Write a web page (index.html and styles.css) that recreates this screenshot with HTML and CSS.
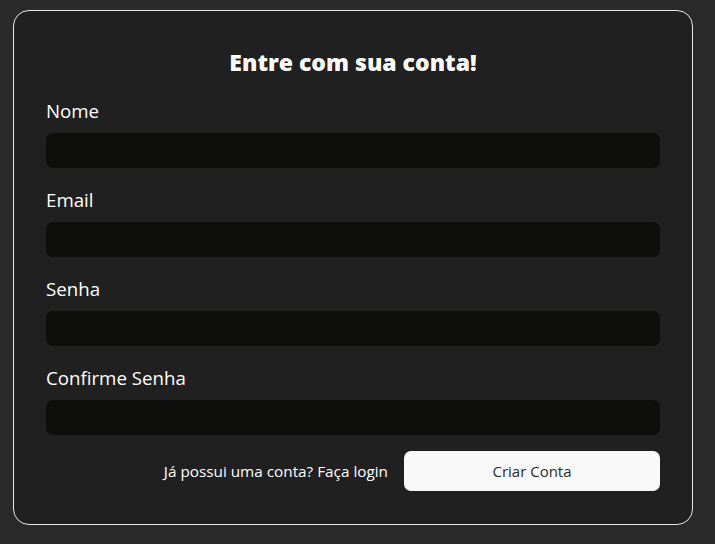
FILE: index.html
```html
<!DOCTYPE html>
<html lang="pt-BR">
<head>
<meta charset="utf-8">
<link rel="stylesheet" href="styles.css">
</head>
<body>
<form class="card">
  <h1 class="title">Entre com sua conta!</h1>
  <div class="field">
    <label class="label">Nome</label>
    <input class="input" type="text">
  </div>
  <div class="field">
    <label class="label">Email</label>
    <input class="input" type="text">
  </div>
  <div class="field">
    <label class="label">Senha</label>
    <input class="input" type="password">
  </div>
  <div class="field field-last">
    <label class="label">Confirme Senha</label>
    <input class="input" type="password">
  </div>
  <div class="actions">
    <a class="link">Já possui uma conta? Faça login</a>
    <button class="button" type="button">Criar Conta</button>
  </div>
</form>
</body>
</html>
```

FILE: styles.css
```css
html, body {
  margin: 0;
  background: #2a2a2a;
}
body {
  padding: 10px 13px;
  font-family: "Open Sans", "Noto Sans", sans-serif;
  color: #ffffff;
}
.card {
  box-sizing: border-box;
  width: 680px;
  background: #202020;
  border: 1px solid #e8e8e8;
  border-radius: 16px;
  padding: 36px 32px 33px;
  display: flex;
  flex-direction: column;
}
.title {
  margin: 0 0 22px;
  text-align: center;
  font-family: "Open Sans", sans-serif;
  font-weight: 800;
  font-size: 23px;
  line-height: 30px;
}
.field {
  display: flex;
  flex-direction: column;
  gap: 10px;
  margin-bottom: 20px;
}
.field-last {
  margin-bottom: 16px;
}
.label {
  font-size: 18.7px;
  line-height: 24px;
}
.input {
  box-sizing: border-box;
  height: 35px;
  width: 100%;
  border: none;
  border-radius: 7px;
  background: #0e0f0d;
  margin: 0;
}
.actions {
  display: flex;
  justify-content: flex-end;
  align-items: center;
  gap: 16px;
}
.link {
  font-size: 15.3px;
  color: #ffffff;
}
.button {
  width: 256px;
  height: 40px;
  border: none;
  border-radius: 7px;
  background: #f9f9f9;
  color: #2a2e33;
  font-family: "Open Sans", "Noto Sans", sans-serif;
  font-size: 15px;
  margin: 0;
}
```
